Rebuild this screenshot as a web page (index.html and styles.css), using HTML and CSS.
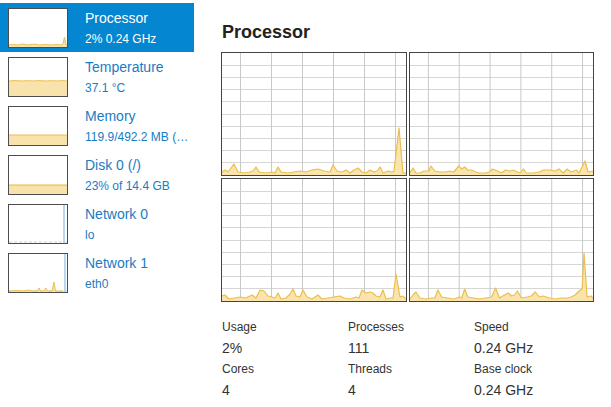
FILE: index.html
```html
<!DOCTYPE html>
<html>
<head>
<meta charset="utf-8">
<link rel="stylesheet" href="styles.css">
</head>
<body>
<div class="app">
  <div class="sidebar">
    <div class="item selected">
      <div class="thumb">
        <svg viewBox="0 0 58 38" preserveAspectRatio="none">
          <polygon class="tf" points="0,36 4,35.5 8,36 14,35 18,36 22,35.5 26,35 30,36 36,35.5 42,36 48,35.5 52,36 54,35 55.5,28 57,36 58,36 58,38 0,38"/>
          <polyline class="tl" points="0,36 4,35.5 8,36 14,35 18,36 22,35.5 26,35 30,36 36,35.5 42,36 48,35.5 52,36 54,35 55.5,28 57,36 58,36"/>
        </svg>
      </div>
      <div class="text">
        <div class="title">Processor</div>
        <div class="sub">2% 0.24 GHz</div>
      </div>
    </div>
    <div class="item">
      <div class="thumb">
        <svg viewBox="0 0 58 38" preserveAspectRatio="none">
          <polygon class="tf" points="0,23 6,22.6 12,23 18,22.7 24,23 30,22.6 36,23 42,22.7 48,23 54,22.6 58,23 58,38 0,38"/>
          <polyline class="tl" points="0,23 6,22.6 12,23 18,22.7 24,23 30,22.6 36,23 42,22.7 48,23 54,22.6 58,23"/>
        </svg>
      </div>
      <div class="text">
        <div class="title">Temperature</div>
        <div class="sub">37.1 °C</div>
      </div>
    </div>
    <div class="item">
      <div class="thumb">
        <svg viewBox="0 0 58 38" preserveAspectRatio="none">
          <rect class="tf" x="0" y="28" width="58" height="10"/>
          <line class="tl" x1="0" y1="28" x2="58" y2="28"/>
        </svg>
      </div>
      <div class="text">
        <div class="title">Memory</div>
        <div class="sub">119.9/492.2 MB (…</div>
      </div>
    </div>
    <div class="item">
      <div class="thumb">
        <svg viewBox="0 0 58 38" preserveAspectRatio="none">
          <rect class="tf" x="0" y="29" width="58" height="9"/>
          <line class="tl strong" x1="0" y1="29" x2="58" y2="29"/>
        </svg>
      </div>
      <div class="text">
        <div class="title">Disk 0 (/)</div>
        <div class="sub">23% of 14.4 GB</div>
      </div>
    </div>
    <div class="item">
      <div class="thumb">
        <svg viewBox="0 0 58 38" preserveAspectRatio="none">
          <line class="nl" x1="0" y1="37" x2="58" y2="37"/>
          <rect class="nb" x="54" y="0" width="2" height="38"/>
        </svg>
      </div>
      <div class="text">
        <div class="title">Network 0</div>
        <div class="sub">lo</div>
      </div>
    </div>
    <div class="item">
      <div class="thumb">
        <svg viewBox="0 0 58 38" preserveAspectRatio="none">
          <line class="nl" x1="0" y1="37" x2="58" y2="37"/>
          <polygon class="tf" points="0,37 10,36.5 14,37 20,36 24,37 28,37 30,34 31.5,37 35,37 37,34 38.5,37 43,37 45,28 46.5,37 58,37 58,38 0,38"/>
          <polyline class="tl" points="0,37 10,36.5 14,37 20,36 24,37 28,37 30,34 31.5,37 35,37 37,34 38.5,37 43,37 45,28 46.5,37 54,37"/>
          <rect class="nb" x="55" y="0" width="2" height="38"/>
        </svg>
      </div>
      <div class="text">
        <div class="title">Network 1</div>
        <div class="sub">eth0</div>
      </div>
    </div>
  </div>

  <div class="main">
    <h1 class="heading">Processor</h1>
    <div class="graphs">
      <div class="graph">
        <svg viewBox="0 0 184 122" preserveAspectRatio="none">
          <g class="hg"><line x1="0" y1="12.5" x2="184" y2="12.5"/><line x1="0" y1="24.5" x2="184" y2="24.5"/><line x1="0" y1="36.5" x2="184" y2="36.5"/><line x1="0" y1="48.5" x2="184" y2="48.5"/><line x1="0" y1="61.5" x2="184" y2="61.5"/><line x1="0" y1="73.5" x2="184" y2="73.5"/><line x1="0" y1="85.5" x2="184" y2="85.5"/><line x1="0" y1="97.5" x2="184" y2="97.5"/><line x1="0" y1="109.5" x2="184" y2="109.5"/></g>
          <g class="vg"><line x1="18.5" y1="0" x2="18.5" y2="122"/><line x1="49.5" y1="0" x2="49.5" y2="122"/><line x1="80.5" y1="0" x2="80.5" y2="122"/><line x1="111.5" y1="0" x2="111.5" y2="122"/><line x1="142.5" y1="0" x2="142.5" y2="122"/><line x1="173.5" y1="0" x2="173.5" y2="122"/></g>
          <polygon class="gf" points="0,119 3,117 6,119 9,115 12,111 16,119 22,120 28,119 31,118 34,114 37,119 44,120 50,119 53,120 56,114 59,119 66,120 72,119 78,118 84,119 90,117 96,116 102,118 108,119 111,112 115,118 120,119 124,117 128,120 132,117 136,115 140,119 144,120 148,117 152,119 155,118 158,114 161,120 166,118 170,119 172,118 177,75 181,120 184,120 184,122 0,122"/>
          <polyline class="gl" points="0,119 3,117 6,119 9,115 12,111 16,119 22,120 28,119 31,118 34,114 37,119 44,120 50,119 53,120 56,114 59,119 66,120 72,119 78,118 84,119 90,117 96,116 102,118 108,119 111,112 115,118 120,119 124,117 128,120 132,117 136,115 140,119 144,120 148,117 152,119 155,118 158,114 161,120 166,118 170,119 172,118 177,75 181,120 184,120"/>
        </svg>
      </div>
      <div class="graph">
        <svg viewBox="0 0 184 122" preserveAspectRatio="none">
          <g class="hg"><line x1="0" y1="12.5" x2="184" y2="12.5"/><line x1="0" y1="24.5" x2="184" y2="24.5"/><line x1="0" y1="36.5" x2="184" y2="36.5"/><line x1="0" y1="48.5" x2="184" y2="48.5"/><line x1="0" y1="61.5" x2="184" y2="61.5"/><line x1="0" y1="73.5" x2="184" y2="73.5"/><line x1="0" y1="85.5" x2="184" y2="85.5"/><line x1="0" y1="97.5" x2="184" y2="97.5"/><line x1="0" y1="109.5" x2="184" y2="109.5"/></g>
          <g class="vg"><line x1="18.5" y1="0" x2="18.5" y2="122"/><line x1="49.5" y1="0" x2="49.5" y2="122"/><line x1="80.5" y1="0" x2="80.5" y2="122"/><line x1="111.5" y1="0" x2="111.5" y2="122"/><line x1="142.5" y1="0" x2="142.5" y2="122"/><line x1="173.5" y1="0" x2="173.5" y2="122"/></g>
          <polygon class="gf" points="0,120 3,115 6,120 10,120 14,118 19,118 21,113 25,118 30,119 36,119 40,118 44,119 49,113 52,116 55,114 58,117 62,117 66,119 70,120 76,120 80,119 83,116 88,118 92,120 96,117 100,118 104,117 108,119 111,120 114,116 117,120 124,120 130,119 134,117 140,117 146,118 150,116 154,120 158,116 162,119 167,117 170,120 176,108 179,119 184,118 184,122 0,122"/>
          <polyline class="gl" points="0,120 3,115 6,120 10,120 14,118 19,118 21,113 25,118 30,119 36,119 40,118 44,119 49,113 52,116 55,114 58,117 62,117 66,119 70,120 76,120 80,119 83,116 88,118 92,120 96,117 100,118 104,117 108,119 111,120 114,116 117,120 124,120 130,119 134,117 140,117 146,118 150,116 154,120 158,116 162,119 167,117 170,120 176,108 179,119 184,118"/>
        </svg>
      </div>
      <div class="graph">
        <svg viewBox="0 0 184 122" preserveAspectRatio="none">
          <g class="hg"><line x1="0" y1="12.5" x2="184" y2="12.5"/><line x1="0" y1="24.5" x2="184" y2="24.5"/><line x1="0" y1="36.5" x2="184" y2="36.5"/><line x1="0" y1="48.5" x2="184" y2="48.5"/><line x1="0" y1="61.5" x2="184" y2="61.5"/><line x1="0" y1="73.5" x2="184" y2="73.5"/><line x1="0" y1="85.5" x2="184" y2="85.5"/><line x1="0" y1="97.5" x2="184" y2="97.5"/><line x1="0" y1="109.5" x2="184" y2="109.5"/></g>
          <g class="vg"><line x1="18.5" y1="0" x2="18.5" y2="122"/><line x1="49.5" y1="0" x2="49.5" y2="122"/><line x1="80.5" y1="0" x2="80.5" y2="122"/><line x1="111.5" y1="0" x2="111.5" y2="122"/><line x1="142.5" y1="0" x2="142.5" y2="122"/><line x1="173.5" y1="0" x2="173.5" y2="122"/></g>
          <polygon class="gf" points="0,117 3,116 7,120 12,119 18,118 24,119 30,116 34,119 38,111 42,112 46,117 50,118 53,119 56,114 59,120 64,119 68,115 71,110 74,117 78,118 81,111 85,118 90,120 96,116 100,120 106,119 112,118 118,117 122,119 128,120 134,118 137,119 140,111 144,114 148,113 151,114 154,117 158,118 161,111 164,120 168,119 171,119 174,95 178,118 181,117 184,120 184,122 0,122"/>
          <polyline class="gl" points="0,117 3,116 7,120 12,119 18,118 24,119 30,116 34,119 38,111 42,112 46,117 50,118 53,119 56,114 59,120 64,119 68,115 71,110 74,117 78,118 81,111 85,118 90,120 96,116 100,120 106,119 112,118 118,117 122,119 128,120 134,118 137,119 140,111 144,114 148,113 151,114 154,117 158,118 161,111 164,120 168,119 171,119 174,95 178,118 181,117 184,120"/>
        </svg>
      </div>
      <div class="graph">
        <svg viewBox="0 0 184 122" preserveAspectRatio="none">
          <g class="hg"><line x1="0" y1="12.5" x2="184" y2="12.5"/><line x1="0" y1="24.5" x2="184" y2="24.5"/><line x1="0" y1="36.5" x2="184" y2="36.5"/><line x1="0" y1="48.5" x2="184" y2="48.5"/><line x1="0" y1="61.5" x2="184" y2="61.5"/><line x1="0" y1="73.5" x2="184" y2="73.5"/><line x1="0" y1="85.5" x2="184" y2="85.5"/><line x1="0" y1="97.5" x2="184" y2="97.5"/><line x1="0" y1="109.5" x2="184" y2="109.5"/></g>
          <g class="vg"><line x1="18.5" y1="0" x2="18.5" y2="122"/><line x1="49.5" y1="0" x2="49.5" y2="122"/><line x1="80.5" y1="0" x2="80.5" y2="122"/><line x1="111.5" y1="0" x2="111.5" y2="122"/><line x1="142.5" y1="0" x2="142.5" y2="122"/><line x1="173.5" y1="0" x2="173.5" y2="122"/></g>
          <polygon class="gf" points="0,120 3,116 6,113 10,119 16,120 22,119 25,119 28,111 32,118 38,119 44,120 50,118 52,119 55,110 58,118 64,119 70,120 76,119 82,118 86,109 90,119 95,116 99,114 102,117 105,116 108,112 112,119 118,118 122,117 126,113 130,118 134,117 140,119 146,120 152,119 158,119 162,118 166,116 170,112 173,110 175,74 178,118 182,117 184,119 184,122 0,122"/>
          <polyline class="gl" points="0,120 3,116 6,113 10,119 16,120 22,119 25,119 28,111 32,118 38,119 44,120 50,118 52,119 55,110 58,118 64,119 70,120 76,119 82,118 86,109 90,119 95,116 99,114 102,117 105,116 108,112 112,119 118,118 122,117 126,113 130,118 134,117 140,119 146,120 152,119 158,119 162,118 166,116 170,112 173,110 175,74 178,118 182,117 184,119"/>
        </svg>
      </div>
    </div>
    <div class="stats">
      <div class="stat"><div class="label">Usage</div><div class="value">2%</div></div>
      <div class="stat"><div class="label">Processes</div><div class="value">111</div></div>
      <div class="stat"><div class="label">Speed</div><div class="value">0.24 GHz</div></div>
      <div class="stat"><div class="label">Cores</div><div class="value">4</div></div>
      <div class="stat"><div class="label">Threads</div><div class="value">4</div></div>
      <div class="stat"><div class="label">Base clock</div><div class="value">0.24 GHz</div></div>
    </div>
  </div>
</div>
</body>
</html>
```

FILE: styles.css
```css
html, body {
  margin: 0;
  padding: 0;
  background: #ffffff;
}
body {
  font-family: "Liberation Sans", Arial, sans-serif;
  color: #333333;
}
.app {
  display: flex;
  align-items: flex-start;
}
.sidebar {
  width: 194px;
  flex: none;
  padding-top: 3px;
  display: flex;
  flex-direction: column;
}
.item {
  height: 49px;
  box-sizing: border-box;
  display: flex;
  align-items: flex-start;
  padding: 5px 4px 0 8px;
}
.item.selected {
  background: #0586d0;
}
.thumb {
  width: 58px;
  height: 38px;
  border: 1px solid #4d4d4d;
  background: #ffffff;
  flex: none;
}
.thumb svg {
  display: block;
  width: 58px;
  height: 38px;
}
.tf {
  fill: #f8e3ad;
}
.tl {
  fill: none;
  stroke: #ecc04e;
  stroke-width: 1;
}
.tl.strong {
  stroke: #e8b53a;
}
.nl {
  stroke: #c9d3da;
  stroke-width: 1;
  stroke-dasharray: 3 2;
}
.nb {
  fill: #b9d8ef;
}
.text {
  margin-left: 17px;
  padding-top: 1px;
  min-width: 0;
  flex: 1;
  color: #1a7cc4;
}
.selected .text {
  color: #ffffff;
}
.title {
  font-size: 14px;
  line-height: 18px;
  white-space: nowrap;
}
.sub {
  font-size: 12px;
  line-height: 16px;
  margin-top: 4px;
  white-space: nowrap;
}
.main {
  padding-left: 27px;
  padding-top: 20px;
}
.heading {
  margin: 0;
  font-size: 18px;
  line-height: 24px;
  font-weight: bold;
  color: #222222;
  padding-left: 1px;
}
.graphs {
  margin-top: 8px;
  display: grid;
  grid-template-columns: 186px 185px;
  grid-template-rows: 124px 124px;
  gap: 2px;
}
.graph {
  border: 1px solid #444444;
  background: #ffffff;
}
.graph svg {
  display: block;
  width: 100%;
  height: 100%;
}
.hg line {
  stroke: #d6d6d6;
  stroke-width: 1;
}
.vg line {
  stroke: #c8c8c8;
  stroke-width: 1;
}
.gf {
  fill: #f9e4ad;
}
.gl {
  fill: none;
  stroke: #ebbf4c;
  stroke-width: 1.2;
  stroke-linejoin: round;
}
.stats {
  margin-top: 17px;
  display: grid;
  grid-template-columns: 126px 126px 126px;
  padding-left: 1px;
}
.label {
  font-size: 12px;
  line-height: 16px;
  color: #333333;
}
.value {
  font-size: 14px;
  line-height: 26px;
  color: #333333;
}
```
